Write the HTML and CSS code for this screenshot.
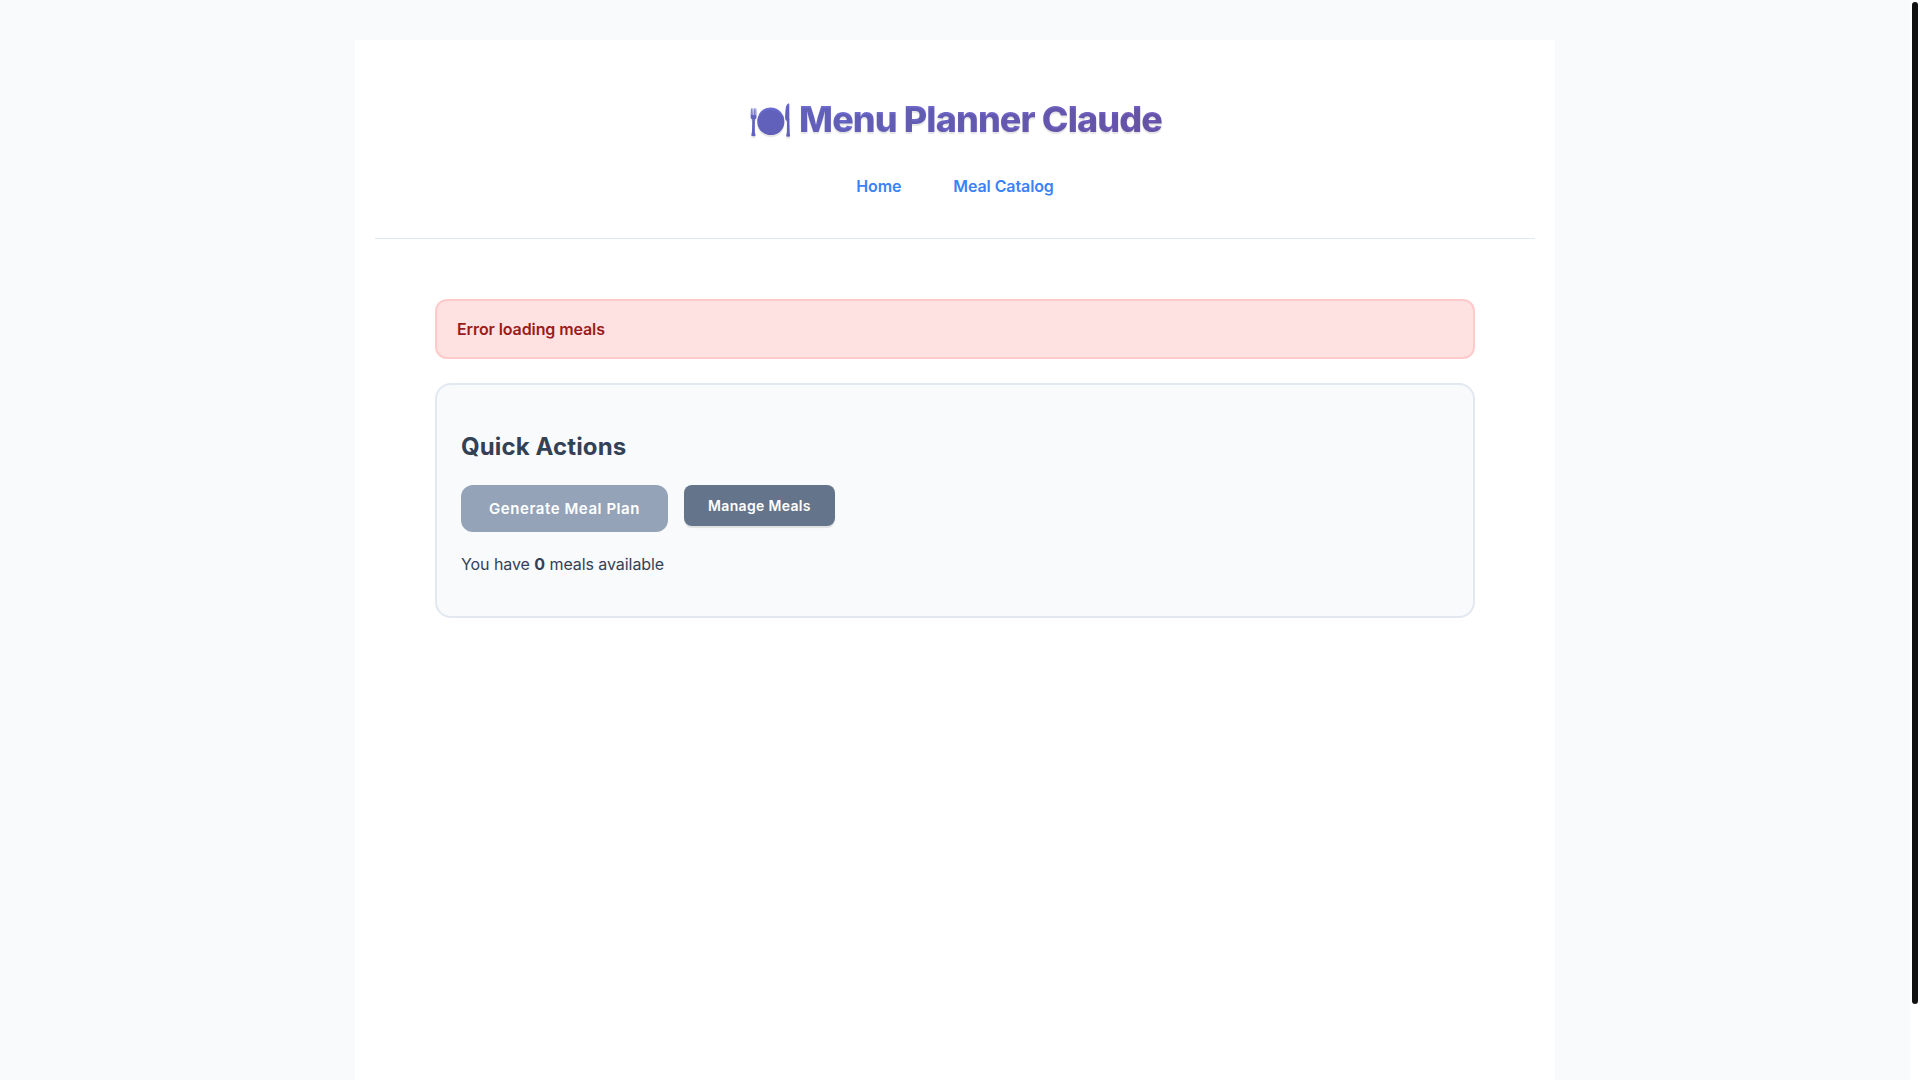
FILE: index.html
```
<!DOCTYPE html>
<html lang="en">
<head>
    <meta charset="UTF-8">
    <meta name="viewport" content="width=device-width, initial-scale=1.0">
    <title>Menu Planner Claude</title>
    <link rel="stylesheet" href="styles.css">
</head>
<body>
    <div class="container">
        <header class="header">
            <h1><span class="logo">🍽️</span> Menu Planner Claude</h1>
            <nav class="nav">
                <a href="#">Home</a>
                <a href="#">Meal Catalog</a>
            </nav>
        </header>

        <main class="main">
            <div class="error">Error loading meals</div>

            <!-- Quick Actions -->
            <section class="card">
                <h2>Quick Actions</h2>
                <div class="actions">
                    <button class="btn btn-primary" disabled>Generate Meal Plan</button>
                    <button class="btn btn-secondary">Manage Meals</button>
                </div>
                <p>You have <strong>0</strong> meals available</p>
            </section>
        </main>
    </div>

    <div class="scrollbar"><div class="scrollbar-thumb"></div></div>
</body>
</html>
```

FILE: styles.css
```
* {
    box-sizing: border-box;
}

html {
    overflow: hidden;
}

body {
    margin: 0;
    padding: 40px 10px 0 0;
    font-family: Inter, sans-serif;
    font-size: 16px;
    line-height: 1.5;
    color: #334155;
    background: #f8fafc;
}

.container {
    max-width: 1200px;
    min-height: 1080px;
    margin: 0 auto;
    padding: 20px;
    background: #ffffff;
}

.header {
    height: 179px;
    padding: 32px 0;
    text-align: center;
    border-bottom: 1px solid #e2e8f0;
}

.header h1 {
    height: 54px;
    margin: 0 0 20px;
    font-size: 36px;
    font-weight: 800;
    letter-spacing: -0.9px;
    background: linear-gradient(135deg, #667eea 0%, #764ba2 100%);
    -webkit-background-clip: text;
    background-clip: text;
    -webkit-text-fill-color: transparent;
    text-shadow: 0 2px 1px rgba(0, 0, 0, 0.1);
}

.logo {
    line-height: 1;
    vertical-align: -1px;
}

.nav {
    display: flex;
    justify-content: center;
    gap: 20px;
}

.nav a {
    padding: 8px 16px;
    color: #3b82f6;
    font-weight: 600;
    letter-spacing: -0.1px;
    text-decoration: none;
}

.main {
    padding: 60px;
}

.error {
    margin-bottom: 24px;
    padding: 16px 20px;
    color: #991b1b;
    font-weight: 600;
    letter-spacing: -0.1px;
    background: #fee2e2;
    border: 2px solid #fecaca;
    border-radius: 12px;
}

.card {
    padding: 24px;
    background: #f8fafc;
    border: 2px solid #e2e8f0;
    border-radius: 16px;
}

.card h2 {
    margin: 20px 0;
    font-size: 24px;
    font-weight: 700;
    letter-spacing: 0.12px;
}

.card p {
    margin: 20px 0 16px;
    letter-spacing: -0.07px;
}

.actions {
    display: flex;
    align-items: flex-start;
    gap: 16px;
}

.btn {
    border: none;
    color: #ffffff;
    font-family: inherit;
    font-weight: 600;
    cursor: pointer;
}

.btn-primary {
    padding: 14px 28px;
    font-size: 15px;
    line-height: 19px;
    letter-spacing: 0.56px;
    border-radius: 12px;
    background: #94a3b8;
}

.btn-primary:disabled {
    cursor: not-allowed;
}

.btn-secondary {
    padding: 12px 24px;
    font-size: 14px;
    line-height: 17px;
    letter-spacing: 0.33px;
    border-radius: 8px;
    background: #64748b;
    box-shadow: 0 2px 1px rgba(0, 0, 0, 0.1);
}

/* Page scrollbar */
.scrollbar {
    position: fixed;
    top: 0;
    right: 0;
    width: 10px;
    height: 100%;
    padding: 2px;
    background: #ffffff;
}

.scrollbar-thumb {
    height: 1002px;
    border-radius: 3px;
    background: #111111;
}
```
